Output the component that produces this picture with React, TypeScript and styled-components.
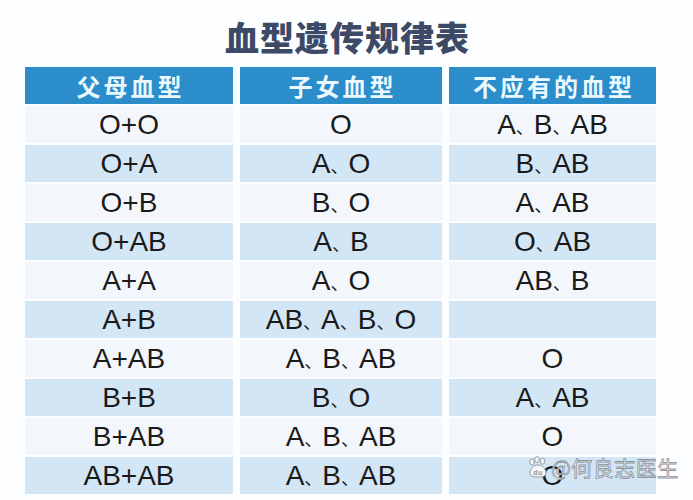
import React, { FC } from "react";
import styled, { createGlobalStyle } from "styled-components";

const GlobalStyle = createGlobalStyle`
  html, body {
    margin: 0;
    padding: 0;
    background: #fdfeff;
  }
  * {
    box-sizing: border-box;
  }
`;

const Page = styled.div`
  position: relative;
  width: 693px;
  height: 500px;
  overflow: hidden;
  background: #fdfeff;
`;

const Title = styled.h1`
  margin: 0;
  padding: 19px 0 0 2px;
  height: 67px;
  text-align: center;
  font-family: "Noto Sans CJK SC", sans-serif;
  font-weight: 900;
  font-size: 34px;
  line-height: 36px;
  letter-spacing: 1px;
  color: #3c4a68;
`;

const Table = styled.div`
  margin-left: 25px;
  width: 631px;
  display: grid;
  grid-template-columns: 208px 202px 207px;
  column-gap: 7px;
  row-gap: 2px;
`;

const HeadCell = styled.div`
  height: 37px;
  display: flex;
  align-items: center;
  justify-content: center;
  background: #2b8dca;
  color: #eaf8ff;
  font-family: "Noto Sans CJK SC", sans-serif;
  font-weight: 700;
  font-size: 24px;
  letter-spacing: 3px;
  padding-left: 3px;
`;

const Cell = styled.div<{ $shaded: boolean }>`
  height: 37px;
  display: flex;
  align-items: center;
  justify-content: center;
  background: ${({ $shaded }) => ($shaded ? "#d3e6f6" : "#f3f7fb")};
  color: #1a1a1a;
  font-family: "Liberation Sans", sans-serif;
  font-size: 28px;
  line-height: 30px;
  padding-top: 1px;
  white-space: nowrap;
`;

const Sep = styled.span`
  font-family: "Noto Sans CJK SC", sans-serif;
  font-size: 18px;
`;

const Watermark = styled.div`
  position: absolute;
  left: 527px;
  top: 452px;
  display: flex;
  align-items: center;
  gap: 2px;
  font-family: "Noto Sans CJK SC", sans-serif;
  font-size: 21px;
  color: #f4f6f8;
  -webkit-text-stroke: 0.8px #8d939a;
  letter-spacing: 0.5px;
`;

const rows: [string, string, string][] = [
  ["O+O", "O", "A、B、AB"],
  ["O+A", "A、O", "B、AB"],
  ["O+B", "B、O", "A、AB"],
  ["O+AB", "A、B", "O、AB"],
  ["A+A", "A、O", "AB、B"],
  ["A+B", "AB、A、B、O", ""],
  ["A+AB", "A、B、AB", "O"],
  ["B+B", "B、O", "A、AB"],
  ["B+AB", "A、B、AB", "O"],
  ["AB+AB", "A、B、AB", "O"],
];

const Value: FC<{ text: string }> = ({ text }) => (
  <span>
    {text.split("、").map((part, k) => (
      <React.Fragment key={k}>
        {k > 0 && <Sep>、</Sep>}
        {part}
      </React.Fragment>
    ))}
  </span>
);

const PawIcon: FC = () => (
  <svg width="22" height="22" viewBox="0 0 22 22">
    <g fill="#f4f6f8" stroke="#8d939a" strokeWidth="0.9">
      <ellipse cx="5" cy="6" rx="2.3" ry="3" />
      <ellipse cx="10" cy="3.6" rx="2.3" ry="3" />
      <ellipse cx="15.5" cy="5.2" rx="2.3" ry="3" />
      <path d="M3 17c0-4 3.5-8 8-8s8 4 8 8c0 3-2.5 4-8 4s-8-1-8-4z" />
    </g>
    <text
      x="11"
      y="18.5"
      textAnchor="middle"
      fontSize="7"
      fontFamily="Liberation Sans, sans-serif"
      fontWeight="700"
      fill="#8d939a"
    >
      du
    </text>
  </svg>
);

const App: FC = () => (
  <Page>
    <GlobalStyle />
    <Title>血型遗传规律表</Title>
    <Table>
      <HeadCell>父母血型</HeadCell>
      <HeadCell>子女血型</HeadCell>
      <HeadCell>不应有的血型</HeadCell>
      {rows.map((row, i) =>
        row.map((text, j) => (
          <Cell key={`${i}-${j}`} $shaded={i % 2 === 1}>
            <Value text={text} />
          </Cell>
        ))
      )}
    </Table>
    <Watermark>
      <PawIcon />
      <span>@何良志医生</span>
    </Watermark>
  </Page>
);

export default App;
